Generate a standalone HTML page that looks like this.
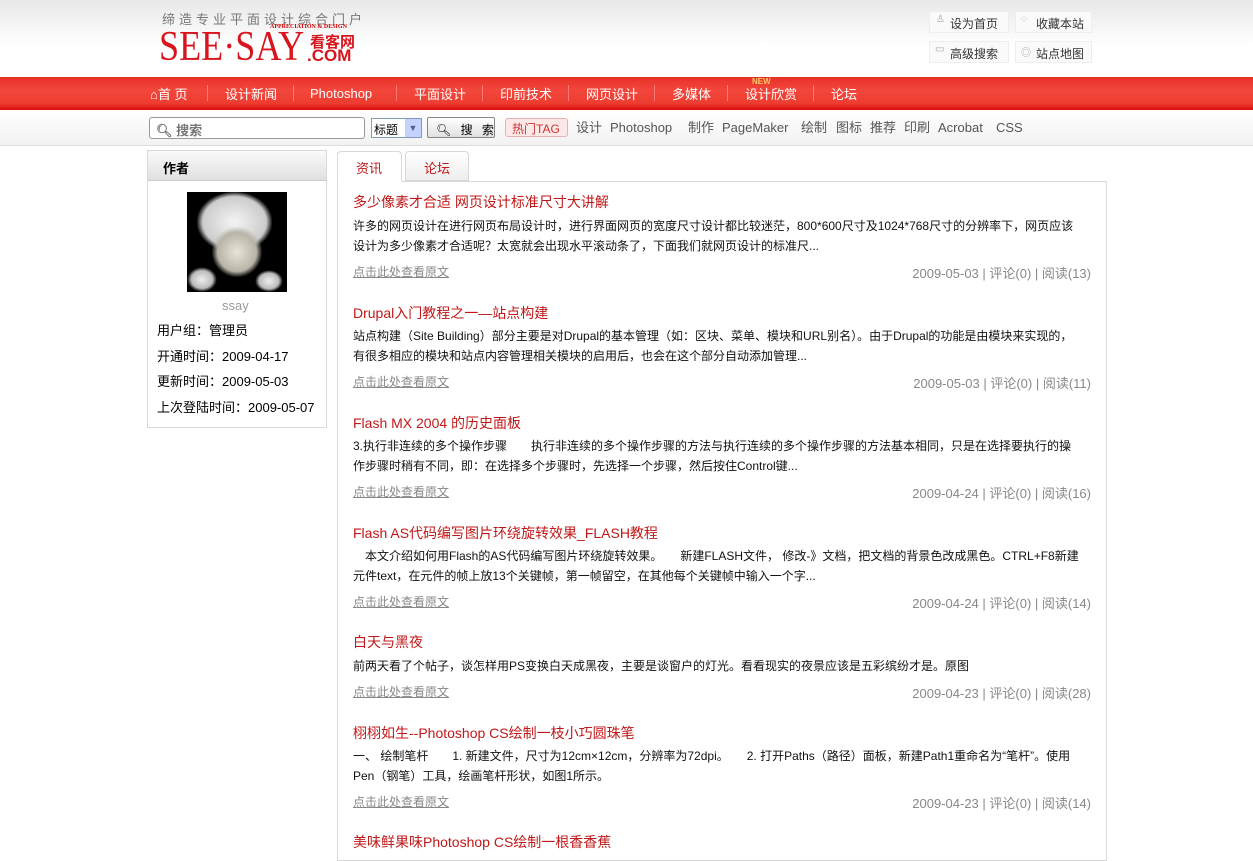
<!DOCTYPE html>
<html><head><meta charset="utf-8"><style>
*{margin:0;padding:0;box-sizing:border-box}
body{width:1253px;height:847px;overflow:hidden;background:#fff;font-family:"Liberation Sans","Noto Sans CJK SC",sans-serif;font-size:12px;color:#000;position:relative}
.a{position:absolute;white-space:nowrap}
#hdr{position:absolute;left:0;top:0;width:1253px;height:77px;background:linear-gradient(#e8e8e8,#fff 60%)}
#nav{position:absolute;left:0;top:77px;width:1253px;height:33px;background:linear-gradient(#e83028,#f2473c 40%,#ee3c30 80%,#d80c0c)}
#nav span{position:absolute;top:7px;color:#fff;font-size:13px}
#nav i{position:absolute;top:8px;width:1px;height:16px;background:#b81a14;border-right:1px solid #f77}
#sb{position:absolute;left:0;top:110px;width:1253px;height:36px;background:linear-gradient(#fff,#f2f2f2);border-bottom:1px solid #ddd}
.tag{position:absolute;top:120px;color:#555;font-size:13px;line-height:16px}
.tb{position:absolute;border:1px solid #eee;background:#fafafa;height:22px;font-size:12px;color:#333;padding:3px 0 0 20px}
.art .t{position:absolute;left:353px;color:#c01818;font-size:14px}
.art .d{position:absolute;left:353px;width:728px;font-size:12px;line-height:20px;color:#111;white-space:normal}
.art .l{position:absolute;left:353px;color:#888;text-decoration:underline}
.art .m{position:absolute;right:162px;color:#888;font-size:13px}
</style></head><body>
<div id="hdr"></div>
<div class="a" style="left:162px;top:9px;font-size:13px;color:#777;letter-spacing:4px">缔造专业平面设计综合门户</div>
<div class="a" style="left:270px;top:24px;font-size:6px;color:#c00;font-family:'Liberation Serif',serif;font-weight:bold">APPRECIATION &amp; DESIGN</div>
<div class="a" style="left:159px;top:26px;font-size:42px;color:#d8141c;font-family:'Liberation Serif',serif;line-height:42px;transform:scaleX(0.86);transform-origin:left top">SEE·SAY</div>
<div class="a" style="left:310px;top:31px;font-size:15px;color:#d8141c;font-weight:bold">看客网</div>
<div class="a" style="left:307px;top:46px;font-size:17px;color:#d8141c;font-weight:bold">.COM</div>
<div class="tb" style="left:929px;top:11px;width:80px">设为首页</div>
<div class="tb" style="left:1015px;top:11px;width:77px">收藏本站</div>
<div class="tb" style="left:929px;top:41px;width:80px">高级搜索</div>
<div class="tb" style="left:1015px;top:41px;width:77px">站点地图</div>
<div class="a" style="left:936px;top:14px;color:#aaa;font-size:10px">♙</div>
<div class="a" style="left:1021px;top:14px;color:#aaa;font-size:10px">◌</div>
<div class="a" style="left:935px;top:44px;color:#aaa;font-size:10px">▭</div>
<div class="a" style="left:1021px;top:44px;color:#aaa;font-size:10px">◎</div>
<div id="nav">
<span style="left:150px">⌂首 页</span><i style="left:207px"></i>
<span style="left:225px">设计新闻</span><i style="left:293px"></i>
<span style="left:310px;top:9px">Photoshop</span><i style="left:396px"></i>
<span style="left:414px">平面设计</span><i style="left:482px"></i>
<span style="left:500px">印前技术</span><i style="left:568px"></i>
<span style="left:586px">网页设计</span><i style="left:654px"></i>
<span style="left:672px">多媒体</span><i style="left:727px"></i>
<span style="left:745px">设计欣赏</span><i style="left:813px"></i>
<span style="left:831px">论坛</span>
<span style="left:752px;top:0;font-size:8px;color:#fc6;font-weight:bold">NEW</span>
</div>
<div id="sb"></div>
<div class="a" style="left:149px;top:117px;width:216px;height:22px;border:1px solid #999;border-radius:3px;background:#fff;padding:2px 0 0 6px;color:#777;font-size:13px;font-weight:bold">🔍︎ 搜索</div>
<div class="a" style="left:371px;top:118px;width:51px;height:20px;border:1px solid #7f9db9;background:#fff;font-size:12px;padding:2px 0 0 2px">标题<span style="position:absolute;right:0;top:0;width:16px;height:18px;background:#c3d3fd;color:#4d6185;font-size:9px;text-align:center;line-height:18px">▼</span></div>
<div class="a" style="left:427px;top:117px;width:68px;height:21px;border:1px solid #888;border-radius:2px;background:linear-gradient(#fff,#e0e0e0);font-size:12px;padding:3px 0 0 8px;letter-spacing:3px">🔍︎ 搜 索</div>
<div class="a" style="left:505px;top:118px;width:63px;height:19px;border:1px solid #e8b0b0;border-radius:3px;background:#fde8e8;color:#c33;font-size:12px;padding:1px 0 0 6px">热门TAG</div>
<span class="tag" style="left:576px">设计</span>
<span class="tag" style="left:610px">Photoshop</span>
<span class="tag" style="left:688px">制作</span>
<span class="tag" style="left:722px">PageMaker</span>
<span class="tag" style="left:801px">绘制</span>
<span class="tag" style="left:836px">图标</span>
<span class="tag" style="left:870px">推荐</span>
<span class="tag" style="left:904px">印刷</span>
<span class="tag" style="left:938px">Acrobat</span>
<span class="tag" style="left:996px">CSS</span>

<div class="a" style="left:147px;top:150px;width:180px;height:278px;border:1px solid #d8d8d8;background:#fff"></div>
<div class="a" style="left:148px;top:151px;width:178px;height:30px;background:linear-gradient(#fafafa,#e0e0e0);border-bottom:1px solid #ccc;font-weight:bold;padding:7px 0 0 15px;font-size:13px">作者</div>
<div class="a" style="left:187px;top:192px;width:100px;height:100px;background:#000;overflow:hidden">
<div style="position:absolute;left:10px;top:0;width:75px;height:60px;background:radial-gradient(ellipse,#f4f4f4 0,#ccc 60%,transparent 72%)"></div>
<div style="position:absolute;left:25px;top:35px;width:50px;height:50px;background:radial-gradient(ellipse,#e8e4d8 0,#b8b4a8 55%,transparent 72%)"></div>
<div style="position:absolute;left:0;top:75px;width:30px;height:25px;background:radial-gradient(ellipse,#eee 0,#bbb 50%,transparent 70%)"></div>
<div style="position:absolute;left:68px;top:78px;width:28px;height:22px;background:radial-gradient(ellipse,#eee 0,#bbb 50%,transparent 70%)"></div>
</div>
<div class="a" style="left:222px;top:298px;color:#999;font-size:13px">ssay</div>
<div class="a" style="left:157px;top:320px;font-size:13px">用户组：管理员</div>
<div class="a" style="left:157px;top:346px;font-size:13px">开通时间：2009-04-17</div>
<div class="a" style="left:157px;top:371px;font-size:13px">更新时间：2009-05-03</div>
<div class="a" style="left:157px;top:397px;font-size:13px">上次登陆时间：2009-05-07</div>

<div class="a" style="left:337px;top:181px;width:770px;height:680px;border:1px solid #d8d8d8"></div>
<div class="a" style="left:337px;top:151px;width:65px;height:31px;border:1px solid #d8d8d8;border-bottom:1px solid #fff;border-radius:4px 4px 0 0;background:#fff;color:#c01818;padding:6px 0 0 18px;font-size:13px">资讯</div>
<div class="a" style="left:405px;top:151px;width:64px;height:30px;border:1px solid #d8d8d8;border-radius:4px 4px 0 0;background:linear-gradient(#fff,#eee);color:#c01818;padding:6px 0 0 18px;font-size:13px">论坛</div>

<div class="art">
<div class="a t" style="top:192px">多少像素才合适 网页设计标准尺寸大讲解</div>
<div class="a d" style="top:216px">许多的网页设计在进行网页布局设计时，进行界面网页的宽度尺寸设计都比较迷茫，800*600尺寸及1024*768尺寸的分辨率下，网页应该设计为多少像素才合适呢？太宽就会出现水平滚动条了，下面我们就网页设计的标准尺...</div>
<div class="a l" style="top:263px">点击此处查看原文</div><div class="a m" style="top:263px">2009-05-03 | 评论(0) | 阅读(13)</div>

<div class="a t" style="top:303px">Drupal入门教程之一—站点构建</div>
<div class="a d" style="top:326px">站点构建（Site Building）部分主要是对Drupal的基本管理（如：区块、菜单、模块和URL别名）。由于Drupal的功能是由模块来实现的，有很多相应的模块和站点内容管理相关模块的启用后，也会在这个部分自动添加管理...</div>
<div class="a l" style="top:373px">点击此处查看原文</div><div class="a m" style="top:373px">2009-05-03 | 评论(0) | 阅读(11)</div>

<div class="a t" style="top:413px">Flash MX 2004 的历史面板</div>
<div class="a d" style="top:436px">3.执行非连续的多个操作步骤　　执行非连续的多个操作步骤的方法与执行连续的多个操作步骤的方法基本相同，只是在选择要执行的操作步骤时稍有不同，即：在选择多个步骤时，先选择一个步骤，然后按住Control键...</div>
<div class="a l" style="top:483px">点击此处查看原文</div><div class="a m" style="top:483px">2009-04-24 | 评论(0) | 阅读(16)</div>

<div class="a t" style="top:523px">Flash AS代码编写图片环绕旋转效果_FLASH教程</div>
<div class="a d" style="top:546px">　本文介绍如何用Flash的AS代码编写图片环绕旋转效果。　　新建FLASH文件， 修改-》文档，把文档的背景色改成黑色。CTRL+F8新建元件text，在元件的帧上放13个关键帧，第一帧留空，在其他每个关键帧中输入一个字...</div>
<div class="a l" style="top:593px">点击此处查看原文</div><div class="a m" style="top:593px">2009-04-24 | 评论(0) | 阅读(14)</div>

<div class="a t" style="top:632px">白天与黑夜</div>
<div class="a d" style="top:656px">前两天看了个帖子，谈怎样用PS变换白天成黑夜，主要是谈窗户的灯光。看看现实的夜景应该是五彩缤纷才是。原图</div>
<div class="a l" style="top:683px">点击此处查看原文</div><div class="a m" style="top:683px">2009-04-23 | 评论(0) | 阅读(28)</div>

<div class="a t" style="top:723px">栩栩如生--Photoshop CS绘制一枝小巧圆珠笔</div>
<div class="a d" style="top:746px">一、 绘制笔杆　　1. 新建文件，尺寸为12cm×12cm，分辨率为72dpi。　　2. 打开Paths（路径）面板，新建Path1重命名为“笔杆”。使用Pen（钢笔）工具，绘画笔杆形状，如图1所示。</div>
<div class="a l" style="top:793px">点击此处查看原文</div><div class="a m" style="top:793px">2009-04-23 | 评论(0) | 阅读(14)</div>

<div class="a t" style="top:832px">美味鲜果味Photoshop CS绘制一根香香蕉</div>
</div>
</body></html>
